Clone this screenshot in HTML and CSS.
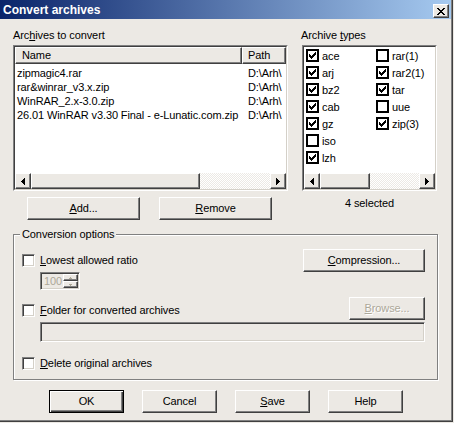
FILE: index.html
```html
<!DOCTYPE html>
<html>
<head>
<meta charset="utf-8">
<link rel="stylesheet" href="styles.css">
</head>
<body>
<svg class="defs" width="0" height="0">
  <defs>
    <symbol id="chk" viewBox="0 0 7 7"><path d="M6 0h1v1H6zM5 1h2v1H5zM0 2h1v1H0zM4 2h3v1H4zM0 3h2v1H0zM3 3h3v1H3zM0 4h5v1H0zM1 5h3v1H1zM2 6h1v1H2z" fill="#000"/></symbol>
    <symbol id="larr" viewBox="0 0 4 7"><path d="M0 3h1v1H0zM1 2h1v3H1zM2 1h1v5H2zM3 0h1v7H3z" fill="#000"/></symbol>
    <symbol id="rarr" viewBox="0 0 4 7"><path d="M0 0h1v7H0zM1 1h1v5H1zM2 2h1v3H2zM3 3h1v1H3z" fill="#000"/></symbol>
  </defs>
</svg>
<div class="window">
  <div class="titlebar">
    <span class="title">Convert archives</span>
    <div class="close raised">
      <svg width="8" height="7" viewBox="0 0 8 7" shape-rendering="crispEdges"><path d="M0 0h2v1H0zM6 0h2v1H6zM1 1h2v1H1zM5 1h2v1H5zM2 2h4v1H2zM3 3h2v1H3zM2 4h4v1H2zM1 5h2v1H1zM5 5h2v1H5zM0 6h2v1H0zM6 6h2v1H6z" fill="#000"/></svg>
    </div>
  </div>
  <div class="content">
    <div class="top">
      <div class="col-left">
        <div class="label">Arc<u>h</u>ives to convert</div>
        <div class="sunken listbox">
          <div class="sunken-in lv">
            <div class="lv-header">
              <div class="hd hd-name raised">Name</div>
              <div class="hd hd-path raised">Path</div>
            </div>
            <div class="lv-rows">
              <div class="row"><span class="c-name">zipmagic4.rar</span><span class="c-path">D:\Arh\</span></div>
              <div class="row"><span class="c-name">rar&amp;winrar_v3.x.zip</span><span class="c-path">D:\Arh\</span></div>
              <div class="row"><span class="c-name">WinRAR_2.x-3.0.zip</span><span class="c-path">D:\Arh\</span></div>
              <div class="row"><span class="c-name">26.01 WinRAR v3.30 Final - e-Lunatic.com.zip</span><span class="c-path">D:\Arh\</span></div>
            </div>
            <div class="hscroll">
              <div class="sb-btn raised"><svg width="4" height="7" shape-rendering="crispEdges"><use href="#larr"/></svg></div>
              <div class="thumb raised thumb-list"></div>
              <div class="track"></div>
              <div class="sb-btn raised"><svg width="4" height="7" shape-rendering="crispEdges"><use href="#rarr"/></svg></div>
            </div>
          </div>
        </div>
        <div class="btnrow">
          <div class="btn raised btn-wide"><u>A</u>dd...</div>
          <div class="btn raised btn-wide"><u>R</u>emove</div>
        </div>
      </div>
      <div class="col-right">
        <div class="label">Archive <u>t</u>ypes</div>
        <div class="sunken typesbox">
          <div class="sunken-in lv">
            <div class="types-grid">
              <div class="ti"><span class="lcb"><svg width="7" height="7" shape-rendering="crispEdges"><use href="#chk"/></svg></span>ace</div>
              <div class="ti"><span class="lcb"><svg width="7" height="7" shape-rendering="crispEdges"><use href="#chk"/></svg></span>arj</div>
              <div class="ti"><span class="lcb"><svg width="7" height="7" shape-rendering="crispEdges"><use href="#chk"/></svg></span>bz2</div>
              <div class="ti"><span class="lcb"><svg width="7" height="7" shape-rendering="crispEdges"><use href="#chk"/></svg></span>cab</div>
              <div class="ti"><span class="lcb"><svg width="7" height="7" shape-rendering="crispEdges"><use href="#chk"/></svg></span>gz</div>
              <div class="ti"><span class="lcb"></span>iso</div>
              <div class="ti"><span class="lcb"><svg width="7" height="7" shape-rendering="crispEdges"><use href="#chk"/></svg></span>lzh</div>
              <div class="ti"><span class="lcb"></span>rar(1)</div>
              <div class="ti"><span class="lcb"><svg width="7" height="7" shape-rendering="crispEdges"><use href="#chk"/></svg></span>rar2(1)</div>
              <div class="ti"><span class="lcb"><svg width="7" height="7" shape-rendering="crispEdges"><use href="#chk"/></svg></span>tar</div>
              <div class="ti"><span class="lcb"></span>uue</div>
              <div class="ti"><span class="lcb"><svg width="7" height="7" shape-rendering="crispEdges"><use href="#chk"/></svg></span>zip(3)</div>
            </div>
            <div class="hscroll">
              <div class="sb-btn raised"><svg width="4" height="7" shape-rendering="crispEdges"><use href="#larr"/></svg></div>
              <div class="thumb raised thumb-types"></div>
              <div class="track"></div>
              <div class="sb-btn raised"><svg width="4" height="7" shape-rendering="crispEdges"><use href="#rarr"/></svg></div>
            </div>
          </div>
        </div>
        <div class="selected">4 selected</div>
      </div>
    </div>

    <fieldset class="group">
      <legend>Conversion options</legend>
      <div class="opt-row1">
        <div class="cbl"><span class="cb3d"></span><span><u>L</u>owest allowed ratio</span></div>
        <div class="btn raised btn-comp"><u>C</u>ompression...</div>
      </div>
      <div class="spinner">
        <div class="spin-text">100</div>
        <div class="updown">
          <div class="ud raised"><svg width="3" height="2" shape-rendering="crispEdges"><path d="M1 0h1v1H1zM0 1h3v1H0z" fill="#aca899"/></svg></div>
          <div class="ud raised"><svg width="3" height="2" shape-rendering="crispEdges"><path d="M0 0h3v1H0zM1 1h1v1H1z" fill="#aca899"/></svg></div>
        </div>
      </div>
      <div class="opt-row2">
        <div class="cbl cbl-folder"><span class="cb3d"></span><span><u>F</u>older for converted archives</span></div>
        <div class="btn raised btn-browse disabled"><u>B</u>rowse...</div>
      </div>
      <div class="edit"></div>
      <div class="cbl cbl-delete"><span class="cb3d"></span><span><u>D</u>elete original archives</span></div>
    </fieldset>

    <div class="bottom">
      <div class="btn btn-std btn-default">OK</div>
      <div class="btn raised btn-std">Cancel</div>
      <div class="btn raised btn-std"><u>S</u>ave</div>
      <div class="btn raised btn-std">Help</div>
    </div>
  </div>
</div>
</body>
</html>
```

FILE: styles.css
```css
* { box-sizing: border-box; }
html, body { margin: 0; padding: 0; }
body {
  width: 454px;
  height: 423px;
  overflow: hidden;
  background: #ECE9E4;
  font-family: "Liberation Sans", Arial, sans-serif;
  font-size: 11px;
  letter-spacing: -0.1px;
  color: #000;
}
.defs { position: absolute; width: 0; height: 0; overflow: hidden; }
u { text-decoration: underline; text-underline-offset: 1px; }

.window {
  width: 453px;
  height: 422px;
  border-right: 1px solid #404040;
  border-bottom: 1px solid #404040;
  box-shadow: inset -1px -1px 0 #808080;
  display: flex;
  flex-direction: column;
}

.raised {
  background: #ECE9E4;
  border: 1px solid;
  border-color: #fff #404040 #404040 #fff;
  box-shadow: inset -1px -1px 0 #808080;
}
.sunken {
  border: 1px solid;
  border-color: #808080 #fff #fff #808080;
}
.sunken-in {
  height: 100%;
  border: 1px solid;
  border-color: #404040 #D4D0C8 #D4D0C8 #404040;
}

.titlebar {
  height: 19px;
  margin-right: 1px;
  background: linear-gradient(to right, #0A246A, #A6CAF0);
  display: flex;
  justify-content: space-between;
  align-items: flex-start;
  flex: none;
}
.title {
  color: #fff;
  font-weight: bold;
  font-size: 12px;
  letter-spacing: 0;
  line-height: 17px;
  padding: 2px 0 0 3px;
}
.close {
  width: 16px;
  height: 14px;
  margin: 4px 2px 0 0;
  display: flex;
  align-items: center;
  justify-content: center;
}

.content { padding: 10px 0 0 13px; }
.top { display: flex; gap: 13px; }
.col-left { width: 275px; }
.col-right { width: 137px; }
.label { height: 13px; line-height: 13px; margin-bottom: 3px; white-space: nowrap; }

.listbox { height: 146px; }
.lv {
  background: #fff;
  display: flex;
  flex-direction: column;
  overflow: hidden;
}
.lv-header { display: flex; height: 17px; flex: none; }
.hd { line-height: 15px; white-space: nowrap; overflow: hidden; }
.hd-name { width: 227px; padding-left: 6px; flex: none; }
.hd-path { flex: 1; padding-left: 5px; }
.lv-rows { flex: 1; padding-top: 2px; overflow: hidden; }
.row { display: flex; height: 14px; line-height: 14px; white-space: nowrap; }
.c-name { width: 227px; padding-left: 2px; flex: none; overflow: hidden; }
.c-path { padding-left: 6px; }

.hscroll { height: 16px; display: flex; flex: none; }
.sb-btn {
  width: 16px;
  flex: none;
  display: flex;
  align-items: center;
  justify-content: center;
}
.thumb { flex: none; }
.thumb-list { width: 169px; }
.thumb-types { width: 50px; }
.track {
  flex: 1;
  background: repeating-conic-gradient(#fff 0 25%, #ECE9E4 0 50%) 0 0 / 2px 2px;
}

.btnrow { display: flex; gap: 19px; margin: 6px 0 0 14px; }
.btn {
  height: 23px;
  line-height: 21px;
  text-align: center;
  white-space: nowrap;
}
.btn-wide { width: 113px; }

.typesbox { height: 146px; width: 135px; margin-left: 1px; }
.types-grid {
  flex: 1;
  display: grid;
  grid-template-columns: 70px auto;
  grid-template-rows: repeat(7, 17px);
  grid-auto-flow: column;
  padding-left: 2px;
}
.ti { display: flex; align-items: center; gap: 3px; white-space: nowrap; }
.lcb {
  width: 13px;
  height: 13px;
  border: 2px solid #000;
  background: #fff;
  display: flex;
  align-items: center;
  justify-content: center;
  flex: none;
}
.selected {
  width: 135px;
  margin: 6px 0 0 1px;
  text-align: center;
  line-height: 13px;
}

.group {
  margin: 8px 0 0 0;
  width: 425px;
  min-width: 0;
  padding: 8px 12px 9px 8px;
  border: 1px solid #808080;
  box-shadow: inset 1px 1px 0 #fff, 1px 1px 0 #fff;
}
.group legend {
  padding: 0 2px;
  margin-left: -2px;
  line-height: 13px;
  background: #ECE9E4;
}
.cbl { display: flex; align-items: center; gap: 5px; line-height: 13px; white-space: nowrap; }
.cb3d {
  width: 13px;
  height: 13px;
  flex: none;
  background: #fff;
  border: 1px solid;
  border-color: #808080 #fff #fff #808080;
  box-shadow: inset 1px 1px 0 #404040, inset -1px -1px 0 #D4D0C8;
}
.opt-row1 {
  display: flex;
  justify-content: space-between;
  align-items: center;
  height: 23px;
}
.btn-comp { width: 122px; }

.spinner {
  margin-left: 18px;
  width: 40px;
  height: 18px;
  display: flex;
  border: 1px solid;
  border-color: #808080 #fff #fff #808080;
  box-shadow: inset 1px 1px 0 #404040, inset -1px -1px 0 #D4D0C8;
  padding: 1px;
}
.spin-text {
  flex: 1;
  color: #ACA899;
  line-height: 14px;
  padding-left: 2px;
}
.updown { width: 15px; display: flex; flex-direction: column; }
.ud {
  flex: 1;
  display: flex;
  align-items: center;
  justify-content: center;
}

.opt-row2 {
  display: flex;
  justify-content: space-between;
  align-items: flex-start;
  margin-top: 7px;
}
.cbl-folder { margin-top: 7px; }
.btn-browse { width: 76px; }
.disabled { color: #ACA899; text-shadow: 1px 1px 0 #fff; }
.edit {
  margin: 2px 0 0 18px;
  width: 385px;
  height: 20px;
  border: 1px solid;
  border-color: #808080 #fff #fff #808080;
  box-shadow: inset 1px 1px 0 #404040, inset -1px -1px 0 #D4D0C8;
}
.cbl-delete { margin-top: 15px; }

.bottom {
  display: flex;
  gap: 18px;
  margin-top: 10px;
  padding-left: 36px;
}
.btn-std { width: 75px; }
.btn-default {
  background: #ECE9E4;
  border: 1px solid #000;
  box-shadow: inset 1px 1px 0 #fff, inset -1px -1px 0 #404040, inset -2px -2px 0 #808080;
}
```
